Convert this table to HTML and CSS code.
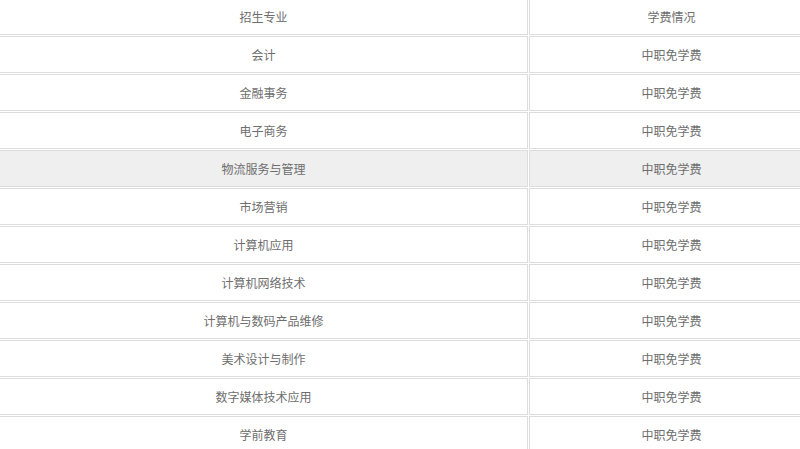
FILE: index.html
```html
<!DOCTYPE html>
<html lang="zh-CN">
<head>
<meta charset="utf-8">
<title>招生专业</title>
<link rel="stylesheet" href="styles.css">
</head>
<body>
<table class="fees">
  <colgroup><col class="c-major"><col class="c-fee"></colgroup>
  <tbody>
    <tr><td>招生专业</td><td>学费情况</td></tr>
    <tr><td>会计</td><td>中职免学费</td></tr>
    <tr><td>金融事务</td><td>中职免学费</td></tr>
    <tr><td>电子商务</td><td>中职免学费</td></tr>
    <tr class="hover"><td>物流服务与管理</td><td>中职免学费</td></tr>
    <tr><td>市场营销</td><td>中职免学费</td></tr>
    <tr><td>计算机应用</td><td>中职免学费</td></tr>
    <tr><td>计算机网络技术</td><td>中职免学费</td></tr>
    <tr><td>计算机与数码产品维修</td><td>中职免学费</td></tr>
    <tr><td>美术设计与制作</td><td>中职免学费</td></tr>
    <tr><td>数字媒体技术应用</td><td>中职免学费</td></tr>
    <tr><td>学前教育</td><td>中职免学费</td></tr>
  </tbody>
</table>
</body>
</html>
```
FILE: styles.css
```css
html, body {
  margin: 0;
  padding: 0;
  background: #fff;
  overflow: hidden;
}
.fees {
  margin: -3px 0 0 -2px;
  width: 817px;
  table-layout: fixed;
  border-collapse: separate;
  border-spacing: 1px;
  font-family: "Microsoft YaHei", "Noto Sans CJK SC", "Noto Sans", sans-serif;
  font-size: 12px;
  color: #6e6e6e;
}
.c-major { width: 529px; }
.c-fee { width: 285px; }
.fees td {
  box-sizing: border-box;
  height: 37px;
  padding: 0;
  border: 1px solid #ddd;
  text-align: center;
  vertical-align: middle;
  line-height: 16px;
}
.fees tr.hover td {
  background: #efefef;
}
```
